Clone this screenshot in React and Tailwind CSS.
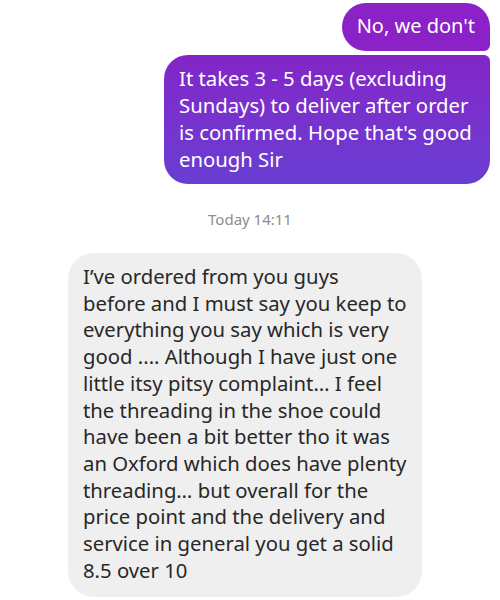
export default function App() {
  const font = { fontFamily: '"Noto Sans", Roboto, sans-serif' };

  return (
    <div
      className="w-[500px] h-[600px] bg-white overflow-hidden flex flex-col"
      style={font}
    >
      {/* Sent messages */}
      <div className="flex flex-col items-end pr-[10px] pt-[3px] gap-[4px]">
        <div className="whitespace-nowrap rounded-[24px] rounded-br-[6px] bg-[#8a22c8] px-[15px] pt-[8px] pb-[10px] text-[20px] leading-[30px] text-white">
          No, we don't
        </div>
        <div className="w-[326px] whitespace-nowrap rounded-[24px] rounded-tr-[6px] bg-gradient-to-b from-[#8324c7] to-[#693dd3] pl-[15px] pr-[10px] pt-[10px] pb-[11px] text-[20.3px] leading-[27px] text-white">
          It takes 3 - 5 days (excluding
          <br />
          Sundays) to deliver after order
          <br />
          is confirmed. Hope that's good
          <br />
          enough Sir
        </div>
      </div>

      {/* Timestamp */}
      <div className="mt-[25px] text-center text-[15px] leading-[20px] text-[#8c8c8c]">
        Today 14:11
      </div>

      {/* Received message */}
      <div className="mt-[24px] ml-[68px] w-[354px] whitespace-nowrap rounded-[26px] bg-[#efefef] pl-[15px] pr-[10px] pt-[10px] pb-[14px] text-[20.3px] leading-[26.7px] text-[#282828]">
        I’ve ordered from you guys
        <br />
        before and I must say you keep to
        <br />
        everything you say which is very
        <br />
        good .... Although I have just one
        <br />
        little itsy pitsy complaint… I feel
        <br />
        the threading in the shoe could
        <br />
        have been a bit better tho it was
        <br />
        an Oxford which does have plenty
        <br />
        threading… but overall for the
        <br />
        price point and the delivery and
        <br />
        service in general you get a solid
        <br />
        8.5 over 10
      </div>
    </div>
  );
}
